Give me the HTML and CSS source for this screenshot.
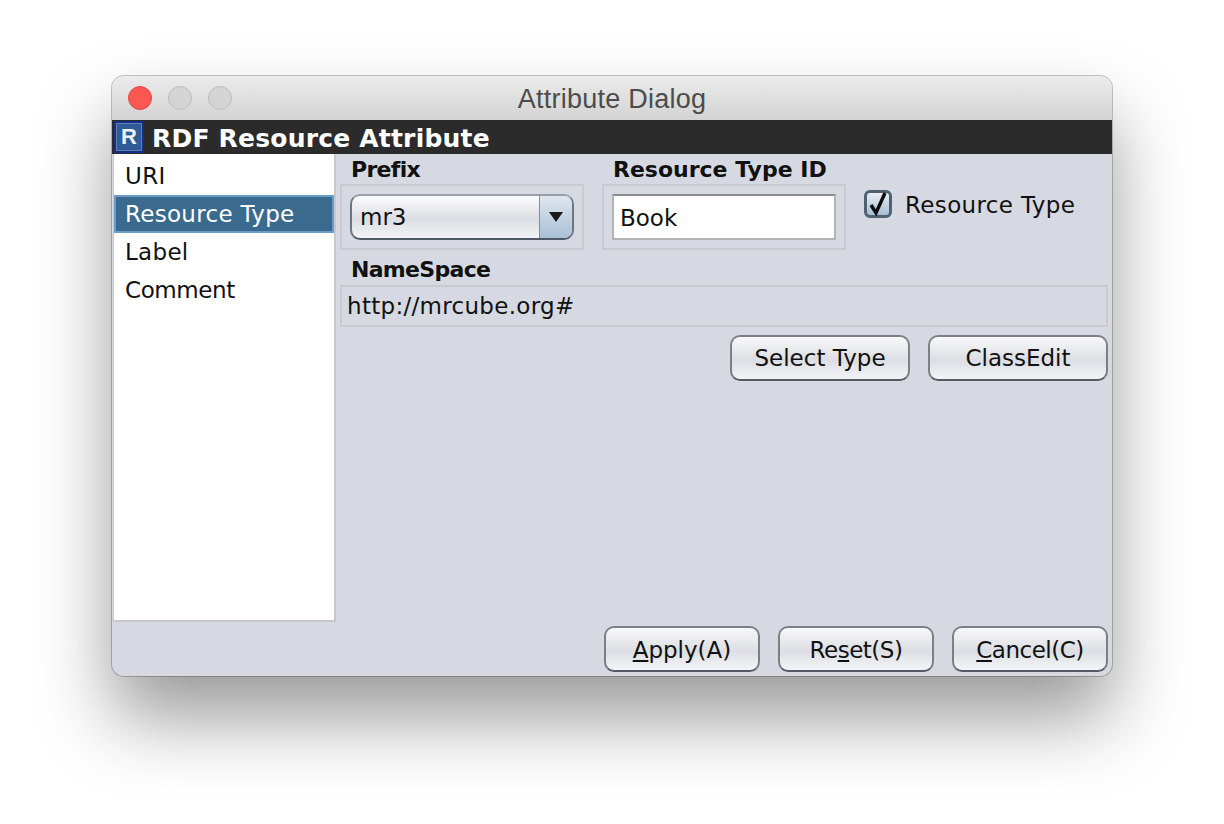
FILE: index.html
```html
<!DOCTYPE html>
<html lang="en">
<head>
    <meta charset="UTF-8">
    <title>Attribute Dialog</title>
    <link rel="stylesheet" href="styles.css">
</head>
<body>
    <div class="window">
        <div class="titlebar">
            <span class="light red"></span>
            <span class="light"></span>
            <span class="light"></span>
            <span class="title">Attribute Dialog</span>
        </div>
        <div class="header">
            <span class="logo"><span class="logo-r">R</span></span>
            <span class="header-text">RDF Resource Attribute</span>
        </div>
        <div class="content">
            <div class="side">
                <ul class="list">
                    <li>URI</li>
                    <li class="selected">Resource Type</li>
                    <li>Label</li>
                    <li class="tight">Comment</li>
                </ul>
            </div>
            <div class="panel">
                <div class="top-row">
                    <div class="group prefix">
                        <div class="label narrow">Prefix</div>
                        <div class="box">
                            <div class="combo">
                                <span class="combo-value">mr3</span>
                                <span class="combo-arrow">
                                    <svg width="14" height="10" viewBox="0 0 14 10"><path d="M0 0h14L7 10z" fill="#1a1a1a"/></svg>
                                </span>
                            </div>
                        </div>
                    </div>
                    <div class="group type-id">
                        <div class="label">Resource Type ID</div>
                        <div class="box">
                            <div class="text-input">Book</div>
                        </div>
                    </div>
                    <div class="check-row">
                        <span class="checkbox">
                            <svg width="24" height="26" viewBox="0 0 24 26"><path d="M5 14l5 8L19 2" fill="none" stroke="#0d0d0d" stroke-width="3.4"/></svg>
                        </span>
                        <span class="check-label">Resource Type</span>
                    </div>
                </div>
                <div class="label narrow ns-label">NameSpace</div>
                <div class="ns-field">http://mrcube.org#</div>
                <div class="btn-row">
                    <button class="btn wide">Select Type</button>
                    <button class="btn wide">ClassEdit</button>
                </div>
            </div>
        </div>
        <div class="footer">
            <button class="btn"><u>A</u>pply(A)</button>
            <button class="btn tight">Re<u>s</u>et(S)</button>
            <button class="btn tight"><u>C</u>ancel(C)</button>
        </div>
    </div>
</body>
</html>
```

FILE: styles.css
```css
html, body {
    margin: 0;
    height: 100%;
    background: #fff;
    overflow: hidden;
}
body {
    padding: 76px 112px 0;
    box-sizing: border-box;
    font-family: "DejaVu Sans", sans-serif;
    font-size: 23px;
    color: #111;
}
.window {
    width: 1000px;
    height: 600px;
    box-sizing: border-box;
    background: #d6d9e2;
    border-radius: 12px;
    box-shadow: 0 42px 74px rgba(0, 0, 0, 0.4), 0 0 0 1px rgba(0, 0, 0, 0.22);
    overflow: hidden;
    display: flex;
    flex-direction: column;
}

/* title bar */
.titlebar {
    height: 44px;
    flex: none;
    box-sizing: border-box;
    padding: 10px 16px 0;
    display: flex;
    gap: 16px;
    align-items: flex-start;
    position: relative;
    background: linear-gradient(#ebebeb, #d3d3d3);
}
.light {
    width: 24px;
    height: 24px;
    box-sizing: border-box;
    border-radius: 50%;
    background: #d4d4d4;
    border: 1px solid #bcbcbc;
}
.light.red {
    background: #fc5753;
    border-color: #e5453f;
}
.title {
    position: absolute;
    left: 0;
    right: 0;
    top: 8px;
    text-align: center;
    font-family: "Liberation Sans", sans-serif;
    font-size: 27px;
    letter-spacing: 0.25px;
    line-height: 30px;
    color: #4c4c4c;
}

/* dark header */
.header {
    height: 34px;
    flex: none;
    background: #2b2b2b;
    display: flex;
    align-items: center;
    padding-left: 2px;
    gap: 8px;
}
.logo {
    width: 30px;
    height: 32px;
    box-sizing: border-box;
    border: 2px solid #12308a;
    outline: 1px solid #5f7fb0;
    outline-offset: -3px;
    background: #2f5c98;
    display: flex;
    align-items: center;
    justify-content: center;
}
.logo-r {
    font-family: "Liberation Sans", sans-serif;
    font-size: 22px;
    font-weight: bold;
    line-height: 1;
    color: #eef1f7;
}
.header-text {
    font-weight: bold;
    font-size: 25px;
    letter-spacing: 0.2px;
    color: #fff;
    line-height: 34px;
    margin-top: 4px;
}

.content {
    height: 468px;
    flex: none;
    display: flex;
}
.side {
    width: 223px;
    margin-left: 1px;
    flex: none;
    box-sizing: border-box;
    background: #fff;
    border: 2px solid #c8c8c8;
    border-top: none;
    border-left-width: 1px;
}
.list {
    list-style: none;
    margin: 0;
    padding: 3px 0 0;
}
.list li {
    height: 38px;
    line-height: 38px;
    padding-left: 11px;
    letter-spacing: 0.3px;
    box-sizing: border-box;
}
.list li.selected {
    background: #3b6a8f;
    border: 2px solid #6b9cc6;
    line-height: 34px;
    padding-left: 9px;
    color: #fff;
}
.list li.tight {
    letter-spacing: -0.4px;
}

.panel {
    flex: 1;
    padding-left: 4px;
    padding-right: 4px;
}
.label {
    font-weight: bold;
    font-size: 22px;
    height: 30px;
    line-height: 32px;
    padding-left: 11px;
}
.label.narrow {
    letter-spacing: -0.7px;
}
.top-row {
    display: flex;
    gap: 18px;
}
.box {
    box-sizing: border-box;
    width: 244px;
    height: 66px;
    padding: 8px;
    border: 2px solid #c9cbd0;
}
.combo {
    height: 46px;
    box-sizing: border-box;
    display: flex;
    border: 2px solid #6f7680;
    border-top-color: #9a9ea6;
    border-bottom-color: #4f5a68;
    border-radius: 10px;
    background: linear-gradient(#fbfbfc, #dcdee3 55%, #f2f3f6);
    overflow: hidden;
}
.combo-value {
    flex: 1;
    padding-left: 8px;
    line-height: 42px;
}
.combo-arrow {
    width: 32px;
    flex: none;
    display: flex;
    align-items: center;
    justify-content: center;
    border-left: 1px solid #7d8ea3;
    background: linear-gradient(#e0e6ee, #a8c0d6);
}
.text-input {
    height: 46px;
    box-sizing: border-box;
    padding-left: 6px;
    line-height: 44px;
    background: #fff;
    border: 2px solid #b4b4b4;
    border-top-color: #8c8c8c;
}
.check-row {
    display: flex;
    align-items: center;
    gap: 13px;
    height: 28px;
    margin-top: 36px;
}
.check-label {
    letter-spacing: 0.35px;
    line-height: 30px;
    margin-top: 2px;
}
.checkbox {
    width: 28px;
    height: 28px;
    box-sizing: border-box;
    display: flex;
    align-items: center;
    justify-content: center;
    border: 3px solid #4f6274;
    border-radius: 6px;
    background: linear-gradient(#eaeff4, #a6bdd2);
}
.checkbox svg {
    flex: none;
}
.ns-label {
    margin-top: 5px;
    line-height: 29px;
}
.ns-field {
    height: 42px;
    box-sizing: border-box;
    padding-left: 5px;
    letter-spacing: 0.3px;
    line-height: 38px;
    border: 2px solid #c9cbd0;
}
.btn-row {
    display: flex;
    justify-content: flex-end;
    gap: 18px;
    margin-top: 8px;
}
.btn {
    width: 156px;
    height: 46px;
    box-sizing: border-box;
    padding: 0;
    font: inherit;
    color: #111;
    border: 2px solid #7b7f86;
    border-bottom-color: #565b63;
    border-radius: 10px;
    background: linear-gradient(#f8f8fa, #dcdee3 55%, #f4f5f8);
}
.btn.wide {
    width: 180px;
}
.btn.tight {
    letter-spacing: -0.5px;
}
.footer {
    display: flex;
    justify-content: flex-end;
    gap: 18px;
    padding: 4px 4px 0 0;
}
.footer .btn {
    padding-top: 2px;
}
```
